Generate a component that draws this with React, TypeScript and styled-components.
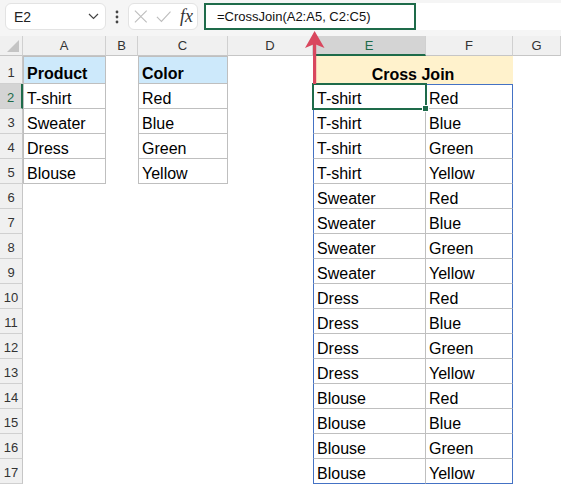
import styled, { createGlobalStyle } from "styled-components";

const GlobalStyle = createGlobalStyle`
  html, body {
    margin: 0;
    padding: 0;
    background: #ffffff;
  }
  body {
    font-family: "Liberation Sans", Arial, sans-serif;
    color: #000;
  }
`;

const Page = styled.div`
  position: relative;
  width: 561px;
  height: 487px;
  overflow: hidden;
  background: #ffffff;
`;

const Toolbar = styled.div`
  display: flex;
  align-items: flex-start;
  height: 36px;
  padding: 3px 0 0 5px;
  box-sizing: border-box;
  background: #f5f5f5;
`;

const NameBox = styled.div`
  display: flex;
  align-items: center;
  justify-content: space-between;
  width: 101px;
  height: 27px;
  box-sizing: border-box;
  padding: 0 6px 0 8px;
  background: #fff;
  border: 1px solid #e3e3e3;
  border-radius: 6px;
  font-size: 14px;
  color: #222;
`;

const Dots = styled.div`
  display: flex;
  align-items: center;
  justify-content: center;
  width: 22px;
  height: 27px;
`;

const IconBox = styled.div`
  display: flex;
  align-items: center;
  gap: 8px;
  width: 70px;
  height: 27px;
  box-sizing: border-box;
  padding: 0 4px 0 5px;
  background: #fff;
  border: 1px solid #e3e3e3;
  border-radius: 6px;
`;

const Fx = styled.span`
  font-family: "Liberation Serif", "Times New Roman", serif;
  font-style: italic;
  font-size: 18px;
  color: #333;
  margin-left: 1px;
`;

const FormulaBar = styled.div`
  display: flex;
  flex: 1;
  height: 27px;
  margin-left: 6px;
  background: #fff;
`;

const FormulaInput = styled.div`
  display: flex;
  align-items: center;
  width: 212px;
  height: 27px;
  box-sizing: border-box;
  padding-left: 11px;
  border: 2px solid #1e6b4a;
  font-size: 13px;
  color: #111;
`;

const Sheet = styled.div`
  display: grid;
  grid-template-columns: 23px 83px 32px 90px 85px 113px 87px 1fr;
  grid-template-rows: 20px 28px repeat(16, 25px);
`;

const Corner = styled.div`
  position: relative;
  background: #f0f0f0;
  border-right: 1px solid #d0d0d0;
  border-bottom: 1px solid #c6c6c6;
  box-sizing: border-box;

  &::after {
    content: "";
    position: absolute;
    right: 3px;
    bottom: 3px;
    border-style: solid;
    border-width: 0 0 12px 12px;
    border-color: transparent transparent #c4c4c4 transparent;
  }
`;

const ColHeader = styled.div<{ $active?: boolean }>`
  display: flex;
  align-items: center;
  justify-content: center;
  box-sizing: border-box;
  font-size: 13px;
  color: ${(p) => (p.$active ? "#1e6b4a" : "#333")};
  background: ${(p) => (p.$active ? "#d4d4d4" : "#f0f0f0")};
  border-right: 1px solid #d0d0d0;
  border-bottom: ${(p) => (p.$active ? "2px solid #1e6b4a" : "1px solid #c6c6c6")};
`;

const RowHeader = styled.div<{ $active?: boolean }>`
  display: flex;
  align-items: flex-end;
  justify-content: center;
  box-sizing: border-box;
  padding-bottom: 3px;
  font-size: 13px;
  line-height: 14px;
  color: ${(p) => (p.$active ? "#1e6b4a" : "#333")};
  background: ${(p) => (p.$active ? "#d4d4d4" : "#f0f0f0")};
  border-right: ${(p) => (p.$active ? "2px solid #1e6b4a" : "1px solid #c6c6c6")};
  border-bottom: 1px solid #d0d0d0;
`;

type Edges = { t?: string; r?: string; b?: string; l?: string };

const Cell = styled.div<{
  $fill?: string;
  $bold?: boolean;
  $center?: boolean;
  $span?: number;
  $edges: Edges;
}>`
  position: relative;
  display: flex;
  align-items: flex-end;
  justify-content: ${(p) => (p.$center ? "center" : "flex-start")};
  grid-column: span ${(p) => p.$span ?? 1};
  box-sizing: border-box;
  padding-left: ${(p) => (p.$center ? "0" : "3px")};
  font-size: 16px;
  line-height: 18px;
  font-weight: ${(p) => (p.$bold ? 700 : 400)};
  white-space: nowrap;
  background: ${(p) => p.$fill ?? "#fff"};
  border-top: ${(p) => (p.$edges.t ? `1px solid ${p.$edges.t}` : "none")};
  border-right: ${(p) => (p.$edges.r ? `1px solid ${p.$edges.r}` : "none")};
  border-bottom: ${(p) => (p.$edges.b ? `1px solid ${p.$edges.b}` : "none")};
  border-left: ${(p) => (p.$edges.l ? `1px solid ${p.$edges.l}` : "none")};
`;

const Selection = styled.div`
  position: absolute;
  z-index: 2;
  top: -2px;
  left: -2px;
  right: -2px;
  bottom: -2px;
  border: 2px solid #1e6b4a;
  pointer-events: none;

  &::after {
    content: "";
    position: absolute;
    right: -4px;
    bottom: -4px;
    width: 5px;
    height: 5px;
    background: #1e6b4a;
    border: 1px solid #fff;
  }
`;

const Arrow = styled.svg`
  position: absolute;
  z-index: 3;
  left: 303px;
  top: 29px;
`;

const GRAY = "#bfbfbf";
const BLUE = "#4472c4";

const columns = ["A", "B", "C", "D", "E", "F", "G"];
const products = ["T-shirt", "Sweater", "Dress", "Blouse"];
const colors = ["Red", "Blue", "Green", "Yellow"];

function renderRow(r: number) {
  const cells: JSX.Element[] = [];
  if (r === 1) {
    const box: Edges = { t: GRAY, r: GRAY, b: GRAY, l: GRAY };
    cells.push(
      <Cell key="A1" $fill="#cde9fb" $bold $edges={box}>Product</Cell>,
      <Cell key="B1" $edges={{}} />,
      <Cell key="C1" $fill="#cde9fb" $bold $edges={box}>Color</Cell>,
      <Cell key="D1" $edges={{}} />,
      <Cell key="E1" $fill="#fff2cc" $bold $center $span={2} $edges={{}}>Cross Join</Cell>,
      <Cell key="G1" $edges={{}} />
    );
    return cells;
  }
  const i = r - 2;
  const small = i < 4;
  const side: Edges = small ? { r: GRAY, b: GRAY, l: GRAY } : {};
  cells.push(
    <Cell key={`A${r}`} $edges={side}>{small ? products[i] : ""}</Cell>,
    <Cell key={`B${r}`} $edges={{}} />,
    <Cell key={`C${r}`} $edges={side}>{small ? colors[i] : ""}</Cell>,
    <Cell key={`D${r}`} $edges={{}} />
  );
  const top = r === 2 ? BLUE : undefined;
  const bottom = r === 17 ? BLUE : GRAY;
  cells.push(
    <Cell key={`E${r}`} $edges={{ t: top, l: BLUE, r: GRAY, b: bottom }}>
      {products[Math.floor(i / 4)]}
      {r === 2 && <Selection />}
    </Cell>,
    <Cell key={`F${r}`} $edges={{ t: top, r: BLUE, b: bottom }}>
      {colors[i % 4]}
    </Cell>,
    <Cell key={`G${r}`} $edges={{}} />
  );
  return cells;
}

export default function App(): JSX.Element {
  const rows = Array.from({ length: 17 }, (_, k) => k + 1);
  return (
    <Page>
      <GlobalStyle />
      <Toolbar>
        <NameBox>
          E2
          <svg width="11" height="7" viewBox="0 0 11 7">
            <polyline points="1,1 5.5,5.5 10,1" fill="none" stroke="#444" strokeWidth="1.2" />
          </svg>
        </NameBox>
        <Dots>
          <svg width="4" height="14" viewBox="0 0 4 14">
            <circle cx="2" cy="2" r="1.4" fill="#444" />
            <circle cx="2" cy="7" r="1.4" fill="#444" />
            <circle cx="2" cy="12" r="1.4" fill="#444" />
          </svg>
        </Dots>
        <IconBox>
          <svg width="15" height="15" viewBox="0 0 15 15">
            <path d="M1 1 L14 14 M14 1 L1 14" stroke="#bdbdbd" strokeWidth="1.2" fill="none" />
          </svg>
          <svg width="17" height="13" viewBox="0 0 17 13">
            <polyline points="1,7 6,12 16,1" stroke="#bdbdbd" strokeWidth="1.2" fill="none" />
          </svg>
          <Fx>fx</Fx>
        </IconBox>
        <FormulaBar>
          <FormulaInput>=CrossJoin(A2:A5, C2:C5)</FormulaInput>
        </FormulaBar>
      </Toolbar>
      <Sheet>
        <Corner />
        {columns.map((c) => (
          <ColHeader key={c} $active={c === "E"}>{c}</ColHeader>
        ))}
        {rows.map((r) => [
          <RowHeader key={`h${r}`} $active={r === 2}>{r}</RowHeader>,
          ...renderRow(r),
        ])}
      </Sheet>
      <Arrow width="24" height="56" viewBox="0 0 24 56">
        <rect x="10" y="12" width="3.2" height="43" fill="#d9475e" />
        <polygon points="11.6,2 2,19 11.6,15 21.5,19" fill="#d9475e" />
      </Arrow>
    </Page>
  );
}
